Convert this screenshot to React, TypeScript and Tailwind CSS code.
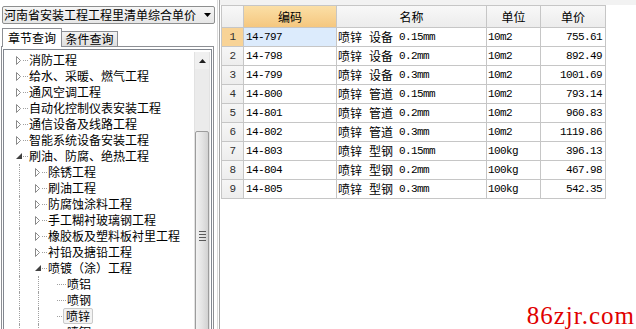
import React from "react";

const CJK = "font-['Noto_Sans_CJK_SC','Noto_Sans',sans-serif]";
const MONO = "font-['Liberation_Mono',monospace] text-[11px] tracking-[-0.6px]";

function Collapsed() {
  return (
    <svg width="5" height="9" viewBox="0 0 5 9" className="shrink-0">
      <path d="M0.5 0.5 L4.5 4.5 L0.5 8.5 Z" fill="white" stroke="#8a8a8a" strokeWidth="1" />
    </svg>
  );
}
function Expanded() {
  return (
    <svg width="6" height="6" viewBox="0 0 6 6" className="shrink-0">
      <path d="M6 0 L6 6 L0 6 Z" fill="#404040" />
    </svg>
  );
}

function Guide() {
  return (
    <div className="w-[19px] h-full shrink-0 pl-[10px]">
      <div className="h-full border-l border-dotted border-[#a0a0a0]" />
    </div>
  );
}

type Node = { label: string; level: number; expanded?: boolean; leaf?: boolean; selected?: boolean };

const nodes: Node[] = [
  { label: "消防工程", level: 1 },
  { label: "给水、采暖、燃气工程", level: 1 },
  { label: "通风空调工程", level: 1 },
  { label: "自动化控制仪表安装工程", level: 1 },
  { label: "通信设备及线路工程", level: 1 },
  { label: "智能系统设备安装工程", level: 1 },
  { label: "刷油、防腐、绝热工程", level: 1, expanded: true },
  { label: "除锈工程", level: 2 },
  { label: "刷油工程", level: 2 },
  { label: "防腐蚀涂料工程", level: 2 },
  { label: "手工糊衬玻璃钢工程", level: 2 },
  { label: "橡胶板及塑料板衬里工程", level: 2 },
  { label: "衬铅及搪铅工程", level: 2 },
  { label: "喷镀（涂）工程", level: 2, expanded: true },
  { label: "喷铝", level: 3, leaf: true },
  { label: "喷钢", level: 3, leaf: true },
  { label: "喷锌", level: 3, leaf: true, selected: true },
  { label: "喷铜", level: 3, leaf: true },
];

function TreeRow({ n }: { n: Node }) {
  const toggle = (
    <div className="w-[19px] h-full shrink-0 flex items-center">
      <div className="w-[7px] shrink-0" />
      <div className="w-[6px] flex items-center justify-start">
        {n.expanded ? <Expanded /> : <Collapsed />}
      </div>
      <div className="w-[1px] shrink-0" />
      <div className="w-[5px] border-t border-dotted border-[#a0a0a0]" />
    </div>
  );
  return (
    <div className="h-[16px] flex items-center pl-[5px] shrink-0">
      {n.level >= 2 && <Guide />}
      {n.level >= 3 && <Guide />}
      {n.leaf ? (
        <div className="w-[19px] h-full shrink-0 flex items-center pl-[10px]">
          <div className="w-[9px] border-t border-dotted border-[#a0a0a0]" />
        </div>
      ) : (
        toggle
      )}
      {n.selected ? (
        <span className={`-ml-[3px] px-[2px] h-[16px] leading-[14px] border border-[#c9c9c9] rounded-[2px] bg-[#f3f3f3] text-[12px] text-black ${CJK}`}>
          {n.label}
        </span>
      ) : (
        <span className={`ml-[1px] text-[12px] leading-[16px] text-black whitespace-nowrap ${CJK}`}>{n.label}</span>
      )}
    </div>
  );
}

function Scrollbar() {
  return (
    <div className="w-[16px] h-full shrink-0 flex flex-col overflow-hidden bg-[#ebebeb] border-x border-[#e2e2e2]">
      <div className="h-[17px] shrink-0 flex items-center justify-center bg-[#f0f0f0]">
        <svg width="7" height="4" viewBox="0 0 7 4">
          <path d="M3.5 0 L7 4 L0 4 Z" fill="#202020" />
        </svg>
      </div>
      <div className="h-[62px] shrink-0" />
      <div className="h-[220px] shrink-0 mx-[0px] rounded-[2px] border border-[#9c9c9c] bg-gradient-to-r from-[#f2f2f2] via-[#e4e4e4] to-[#d2d2d2] flex flex-col items-center pt-[99px]">
        <div className="w-[7px] border-t border-[#5a5a5a] mb-[2px]" />
        <div className="w-[7px] border-t border-[#5a5a5a] mb-[2px]" />
        <div className="w-[7px] border-t border-[#5a5a5a] mb-[2px]" />
        <div className="w-[7px] border-t border-[#5a5a5a]" />
      </div>
    </div>
  );
}

const rows = [
  ["14-797", "设备", "0.15mm", "10m2", "755.61"],
  ["14-798", "设备", "0.2mm", "10m2", "892.49"],
  ["14-799", "设备", "0.3mm", "10m2", "1001.69"],
  ["14-800", "管道", "0.15mm", "10m2", "793.14"],
  ["14-801", "管道", "0.2mm", "10m2", "960.83"],
  ["14-802", "管道", "0.3mm", "10m2", "1119.86"],
  ["14-803", "型钢", "0.15mm", "100kg", "396.13"],
  ["14-804", "型钢", "0.2mm", "100kg", "467.98"],
  ["14-805", "型钢", "0.3mm", "100kg", "542.35"],
];

export default function App() {
  return (
    <div className="w-[636px] h-[329px] flex overflow-hidden bg-white relative">
      {/* Left panel */}
      <div className="w-[218px] h-full shrink-0 flex flex-col bg-white border-r border-[#dadada]">
        <div className="h-[6px] shrink-0" />
        <div className="h-[18px] shrink-0 ml-[2px] mr-[2px] flex items-center border border-[#8e8f8f] rounded-[2px] bg-gradient-to-b from-[#f6f6f6] to-[#e6e6e6]">
          <span className={`flex-1 pl-[1px] text-[12px] leading-[16px] text-black whitespace-nowrap overflow-hidden ${CJK}`}>
            河南省安装工程工程里清单综合单价
          </span>
          <div className="w-[14px] flex items-center justify-center">
            <svg width="7" height="4" viewBox="0 0 7 4">
              <path d="M0 0 L7 0 L3.5 4 Z" fill="#000" />
            </svg>
          </div>
        </div>
        <div className="h-[4px] shrink-0" />
        {/* tabs */}
        <div className="h-[19px] shrink-0 flex items-end pl-[2px] relative z-10">
          <div className={`h-[19px] w-[60px] border border-b-0 border-[#8d8f94] bg-white flex items-center justify-center text-[12px] text-black ${CJK}`}>
            章节查询
          </div>
          <div className={`h-[16px] w-[56px] border border-l-0 border-[#8d8f94] bg-gradient-to-b from-[#f3f3f3] to-[#dedede] flex items-center justify-center text-[12px] text-black ${CJK}`}>
            条件查询
          </div>
        </div>
        {/* panel */}
        <div className="flex-1 min-h-0 ml-[1px] mr-[3px] -mt-[1px] border border-b-0 border-[#8d8f94] px-[1px] pt-[2px] flex flex-col">
          <div className="flex-1 min-h-0 border border-b-0 border-[#828790] flex pt-[2px] pr-[1px]">
            <div className="flex-1 min-w-0 flex flex-col overflow-hidden">
              {nodes.map((n, i) => (
                <TreeRow key={i} n={n} />
              ))}
            </div>
            <Scrollbar />
          </div>
        </div>
      </div>
      <div className="w-[1px] shrink-0 bg-white" />
      {/* Right panel */}
      <div className="flex-1 h-full flex flex-col border-l border-[#a3a3a3] bg-white">
        <div className="h-[5px] shrink-0 bg-[#f2f2f2]" />
        <div className="pl-[1px]">
          <div className="w-[385px] border-l border-t border-[#c6c6c6] flex flex-col">
            <div className="h-[22px] flex">
              <div className="w-[22px] h-full border-r border-b border-[#c6c6c6] bg-gradient-to-b from-[#f8f8f8] to-[#ececec]" />
              <div className={`w-[93px] h-full border-r border-b border-[#c6c6c6] bg-gradient-to-b from-[#fbdfa6] to-[#f5c77f] flex items-center justify-center text-[12px] text-black ${CJK}`}>编码</div>
              <div className={`w-[150px] h-full border-r border-b border-[#c6c6c6] bg-gradient-to-b from-[#f8f8f8] to-[#ececec] flex items-center justify-center text-[12px] text-black ${CJK}`}>名称</div>
              <div className={`w-[54px] h-full border-r border-b border-[#c6c6c6] bg-gradient-to-b from-[#f8f8f8] to-[#ececec] flex items-center justify-center text-[12px] text-black ${CJK}`}>单位</div>
              <div className={`w-[65px] h-full border-r border-b border-[#c6c6c6] bg-gradient-to-b from-[#f8f8f8] to-[#ececec] flex items-center justify-center text-[12px] text-black ${CJK}`}>单价</div>
            </div>
            {rows.map((r, i) => (
              <div key={i} className="h-[19px] flex">
                <div className={`w-[22px] h-full border-r border-b border-[#c6c6c6] flex items-center justify-center text-[#303030] ${MONO} ${i === 0 ? "bg-[#f8d396]" : "bg-gradient-to-b from-[#f6f6f6] to-[#ededed]"}`}>
                  {i + 1}
                </div>
                <div className={`w-[93px] h-full border-r border-b border-[#c6c6c6] flex items-center pl-[2px] text-black ${MONO} ${i === 0 ? "bg-[#dcebfc]" : ""}`}>
                  {r[0]}
                </div>
                <div className="w-[150px] h-full border-r border-b border-[#c6c6c6] flex items-center pl-[1px] text-black whitespace-nowrap overflow-hidden">
                  <span className={`text-[12px] ${CJK}`}>喷锌</span>
                  <span className={`ml-[7px] text-[12px] ${CJK}`}>{r[1]}</span>
                  <span className={`ml-[6px] ${MONO}`}>{r[2]}</span>
                </div>
                <div className={`w-[54px] h-full border-r border-b border-[#c6c6c6] flex items-center pl-[1px] text-black ${MONO}`}>
                  {r[3]}
                </div>
                <div className={`w-[65px] h-full border-r border-b border-[#c6c6c6] flex items-center justify-end pr-[3px] text-black ${MONO}`}>
                  {r[4]}
                </div>
              </div>
            ))}
          </div>
        </div>
      </div>
      <div className="absolute right-[1px] bottom-[1px] text-[25px] leading-[25px] tracking-[1px] text-[#e00000] font-['Liberation_Serif',serif]">
        86zjr.com
      </div>
    </div>
  );
}
